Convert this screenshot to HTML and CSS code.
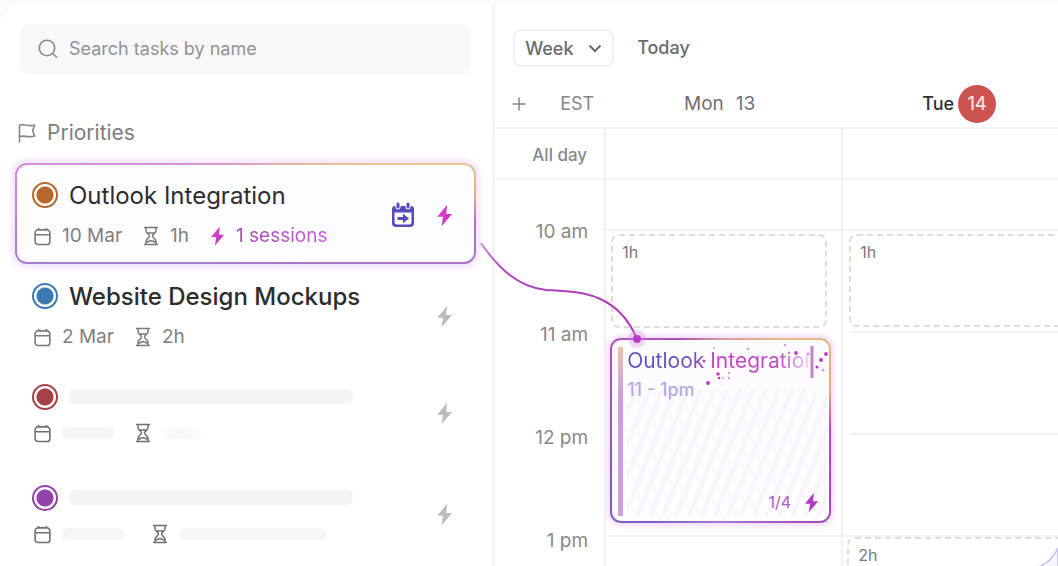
FILE: index.html
```html
<!DOCTYPE html>
<html lang="en">
<head>
<meta charset="utf-8">
<meta name="viewport" content="width=device-width, initial-scale=1">
<title>Task planner</title>
<link rel="stylesheet" href="styles.css">
</head>
<body>
<svg class="sprite" aria-hidden="true">
  <defs>
    <linearGradient id="bolt-pink" x1="0" y1="0" x2="1" y2="1">
      <stop offset="0" stop-color="#e04bb4"/>
      <stop offset="1" stop-color="#b92fd0"/>
    </linearGradient>
    <symbol id="i-bolt" viewBox="0 0 16 22"><path d="M10.6 0.6 1 12.2h5.6L5.2 21.4 15.2 9.6H9.6z"/></symbol>
    <symbol id="i-cal" viewBox="0 0 18 20"><path d="M4.2 3h9.6a3 3 0 0 1 3 3v9.500a3 3 0 0 1-3 3H4.200a3 3 0 0 1-3-3V6a3 3 0 0 1 3-3zM1.200 8.200h15.600M4.800 1v2M13.200 1v2"/></symbol>
    <symbol id="i-glass" viewBox="0 0 16 20"><path d="M1 1.500h14M1 18.500h14M3 1.500v3.200c0 2.500 3.500 3.300 3.500 5.300s-3.500 2.800-3.500 5.300v3.200M13 1.500v3.200c0 2.500-3.500 3.300-3.500 5.300s3.500 2.800 3.500 5.300v3.200M5 7h6M4 16.500c1.500-2.500 6.500-2.500 8 0"/></symbol>
  </defs>
</svg>

<div class="app">
  <aside class="sidebar">
    <label class="search">
      <svg class="search-icon" viewBox="0 0 20 20" aria-hidden="true"><circle cx="9" cy="9" r="7.700"/><path d="m14.500 14.500 4.500 4"/></svg>
      <input type="search" placeholder="Search tasks by name" aria-label="Search tasks by name">
    </label>

    <h2 class="heading">
      <svg class="flag" viewBox="0 0 18 20" aria-hidden="true"><path d="M1.500 19.500V1.500M1.500 2c5-1 9 1.500 15 .3l-1.800 5.500 1.800 5.200c-6 2-10-1-15 .5"/></svg>
      Priorities
    </h2>

    <ul class="tasks">
      <li class="task task--active">
        <span class="dot dot--orange"></span>
        <h3 class="title">Outlook Integration</h3>
        <div class="meta">
          <span class="tag"><svg class="cal"><use href="#i-cal"/></svg>10 Mar</span>
          <span class="tag"><svg class="glass"><use href="#i-glass"/></svg>1h</span>
          <span class="tag tag--pink"><svg class="bolt-small"><use href="#i-bolt"/></svg><span class="sessions">1 sessions</span></span>
        </div>
        <div class="actions">
          <button type="button" aria-label="Move to calendar">
            <svg class="move" viewBox="0 0 24 26" aria-hidden="true">
              <path class="move-body" d="M4 4h16a3 3 0 0 1 3 3v14a4 4 0 0 1-4 4H5a4 4 0 0 1-4-4V7a3 3 0 0 1 3-3z"/>
              <path class="move-page" d="M3.500 10.500h17v9.500a2.500 2.500 0 0 1-2.500 2.500H6A2.500 2.500 0 0 1 3.500 20z"/>
              <path class="move-gap" d="M7 2v3M17 2v3"/>
              <path class="move-ring" d="M7 2v3M17 2v3"/>
              <path class="move-arrow" d="M6.500 15h5.500v-3.200l6 4.700-6 4.700V18H6.500z"/>
            </svg>
          </button>
          <button type="button" class="pink" aria-label="Auto-schedule"><svg class="bolt"><use href="#i-bolt"/></svg></button>
        </div>
      </li>
      <li class="task">
        <span class="dot dot--blue"></span>
        <h3 class="title title--strong">Website Design Mockups</h3>
        <div class="meta">
          <span class="tag"><svg class="cal"><use href="#i-cal"/></svg>2 Mar</span>
          <span class="tag"><svg class="glass"><use href="#i-glass"/></svg>2h</span>
        </div>
        <div class="actions"><button type="button" aria-label="Auto-schedule"><svg class="bolt"><use href="#i-bolt"/></svg></button></div>
      </li>
      <li class="task task--loading">
        <span class="dot dot--red"></span>
        <div class="title"><span class="bar bar--title"></span></div>
        <div class="meta">
          <span class="tag"><svg class="cal"><use href="#i-cal"/></svg><span class="bar bar--short"></span></span>
          <span class="tag"><svg class="glass"><use href="#i-glass"/></svg><span class="bar bar--faint"></span></span>
        </div>
        <div class="actions"><button type="button" aria-label="Auto-schedule"><svg class="bolt"><use href="#i-bolt"/></svg></button></div>
      </li>
      <li class="task task--loading">
        <span class="dot dot--purple"></span>
        <div class="title"><span class="bar bar--title"></span></div>
        <div class="meta meta--wide">
          <span class="tag"><svg class="cal"><use href="#i-cal"/></svg><span class="bar bar--date"></span></span>
          <span class="tag"><svg class="glass"><use href="#i-glass"/></svg><span class="bar bar--long"></span></span>
        </div>
        <div class="actions"><button type="button" aria-label="Auto-schedule"><svg class="bolt"><use href="#i-bolt"/></svg></button></div>
      </li>
    </ul>
  </aside>

  <main class="calendar">
    <div class="toolbar">
      <div class="view">
        <select aria-label="Calendar view"><option>Week</option></select>
        <svg class="chevron" viewBox="0 0 14 9" aria-hidden="true"><path d="m1.500 1.500 5.500 5.500 5.500-5.500"/></svg>
      </div>
      <button type="button" class="today">Today</button>
    </div>

    <div class="grid days">
      <div class="zone">
        <button type="button" aria-label="Add time zone"><svg class="plus" viewBox="0 0 14 14" aria-hidden="true"><path d="M7 .5v13M.5 7h13"/></svg></button>
        <span>EST</span>
      </div>
      <div class="day">Mon <span>13</span></div>
      <div class="day day--now">Tue <span class="date">14</span></div>
    </div>

    <div class="grid body">
      <div class="times">
        <div class="allday">All day</div>
        <div class="hours"><span>10 am</span><span>11 am</span><span>12 pm</span><span>1 pm</span></div>
      </div>

      <div class="column">
        <div class="slot slot--allday"></div>
        <div class="slot slot--half"></div>
        <div class="slot slot--bare"></div>
        <div class="slot slot--bare"></div>
        <div class="slot"></div>
        <div class="hold hold--mon">1h</div>
        <article class="event">
          <div class="stripe"></div>
          <div class="event-body">
            <h3 class="event-title">Outlook Integration</h3>
            <p class="event-time">11 - 1pm</p>
            <div class="event-foot">1/4 <svg class="bolt-event"><use href="#i-bolt"/></svg></div>
          </div>
          <svg class="sparks" viewBox="0 0 130 60" aria-hidden="true">
            <path class="caret" d="M113 6v32"/>
            <g class="strong"><circle cx="9" cy="43" r="2"/><circle cx="19" cy="34" r="1.800"/><circle cx="20" cy="38" r="1.300"/><circle cx="97" cy="13" r="1.900"/><circle cx="5" cy="21" r="1.500"/><circle cx="122" cy="20" r="2"/><circle cx="127" cy="14" r="1.900"/><circle cx="118" cy="27" r="1.600"/></g>
            <g class="mid"><circle cx="30" cy="33" r="1.200"/><circle cx="30" cy="38" r="1.200"/><circle cx="24" cy="38" r="1"/><circle cx="109" cy="14" r="1.700"/><circle cx="86" cy="5" r="1.300"/><circle cx="49" cy="9" r="1.300"/><circle cx="15" cy="8" r="1"/><circle cx="124" cy="30" r="1.500"/></g>
          </svg>
        </article>
      </div>

      <div class="column column--inset">
        <div class="slot slot--allday"></div>
        <div class="slot slot--half"></div>
        <div class="slot"></div>
        <div class="slot"></div>
        <div class="slot"></div>
        <div class="hold hold--tue">1h</div>
        <div class="hold hold--late">2h
          <svg class="arc" viewBox="0 0 40 40" aria-hidden="true"><path d="M1 23C10 20 16 15 21 4V40H1z"/></svg>
        </div>
      </div>
    </div>

    <svg class="connector" viewBox="0 0 170 120" aria-hidden="true">
      <defs>
        <linearGradient id="wire" x1="0" y1="0" x2="1" y2="0">
          <stop offset="0" stop-color="#c98ad8"/>
          <stop offset=".15" stop-color="#b03cc0"/>
          <stop offset="1" stop-color="#b03cc0"/>
        </linearGradient>
      </defs>
      <path d="M1 4C18 29 38 48 66 51C98 53 137 52 157 100" stroke="url(#wire)"/>
      <circle class="halo" cx="157" cy="100" r="9"/>
      <circle class="node" cx="157" cy="100" r="4"/>
    </svg>
  </main>
</div>
</body>
</html>
```
FILE: styles.css
```css
* { box-sizing: border-box; }

body {
  margin: 0;
  background: #fafaff;
  color: #2c2c2e;
  font-family: Inter, "Liberation Sans", sans-serif;
  font-size: 18px;
  line-height: 24px;
}

h2, h3, p, ul { margin: 0; padding: 0; font-weight: 400; }
ul { list-style: none; }
button { padding: 0; border: 0; background: none; color: inherit; font: inherit; cursor: pointer; }
svg { display: block; flex: none; fill: none; }

.sprite { position: absolute; width: 0; height: 0; }

.app {
  display: flex;
  height: 100vh;
  padding-top: 4px;
  overflow: hidden;
}

/* Sidebar */
.sidebar {
  flex: 0 0 46.8%;
  background: #fff;
  border-top-left-radius: 24px;
  border-right: 3px solid #f3f3f4;
}

.search {
  display: flex;
  align-items: center;
  gap: 11px;
  height: 50px;
  margin: 20px 22px 0 20px;
  padding: 0 18px;
  border-radius: 8px;
  background: #f8f8f8;
}
.search-icon { width: 20px; height: 20px; stroke: #8a8a8c; stroke-width: 1.6; }
.search input {
  flex: 1;
  min-width: 0;
  padding: 0;
  border: 0;
  outline: 0;
  background: none;
  color: #555;
  font: inherit;
}
.search input::placeholder { color: #929294; opacity: 1; }

.heading {
  display: flex;
  align-items: center;
  gap: 11px;
  margin: 47px 0 18px 18px;
  color: #7d7d7f;
  font-size: 21px;
  line-height: 24px;
}
.flag { width: 18px; height: 20px; stroke: #858587; stroke-width: 1.6; }

.tasks { margin: 0 16px 0 15px; }

.task {
  display: grid;
  grid-template-columns: 26px 1fr auto;
  align-content: start;
  column-gap: 11px;
  row-gap: 10px;
  height: 101px;
  padding: 15px 21px 0 15px;
  border: 2px solid transparent;
  border-radius: 12px;
}
.task--active {
  background:
    linear-gradient(#fdfdff, #fdfdff) padding-box,
    conic-gradient(#dc9fbb, #ecc590 77deg, #e2ab85 86deg, #b26fc6 92deg, #a873c8 102deg, #a57fcc 258deg, #cb86dd 276deg, #d68ede 284deg, #dc9fbb) border-box;
  box-shadow: 0 0 5px 4px #f4e6fb;
}

.dot {
  width: 26px;
  height: 26px;
  margin-top: 2px;
  border: 2px solid;
  border-radius: 50%;
  background: radial-gradient(circle, currentColor 8px, #fff 9px);
}
.dot--orange { color: #b5672c; }
.dot--blue { color: #3c7bb1; }
.dot--red { color: #a64047; }
.dot--purple { color: #9642ab; }

.title { font-size: 24px; line-height: 32px; white-space: nowrap; }
.title--strong { font-weight: 500; }

.meta {
  grid-column: 1 / 3;
  grid-row: 2;
  display: flex;
  gap: 21px;
  height: 28px;
  padding-left: 2px;
  color: #7f7f81;
  font-size: 19px;
}
.meta--wide { gap: 28px; }
.tag { display: flex; align-items: center; gap: 11px; }
.cal { width: 17px; height: 19px; stroke: #79797b; stroke-width: 1.7; }
.glass { width: 16px; height: 20px; stroke: #79797b; stroke-width: 1.5; }
.bolt-small { width: 15px; height: 20px; fill: url(#bolt-pink); }
.sessions {
  background: linear-gradient(90deg, #9c4cb5, #c95ad8);
  -webkit-background-clip: text;
  background-clip: text;
  color: transparent;
}

.actions {
  grid-column: 3;
  grid-row: 1 / 3;
  display: flex;
  align-items: center;
  gap: 21px;
  color: #bcbcbd;
}
.bolt { width: 17px; height: 23px; fill: currentColor; }
.pink .bolt { fill: url(#bolt-pink); }
.move { width: 24px; height: 26px; }
.move-body { fill: #554bb9; }
.move-page { fill: #fdfdff; }
.move-gap { stroke: #fdfdff; stroke-width: 5; stroke-linecap: round; }
.move-ring { stroke: #554bb9; stroke-width: 3; stroke-linecap: round; }
.move-arrow { fill: #554bb9; }

.task--loading { row-gap: 11px; }
.task--loading .meta { height: 24px; }
.task--loading .cal, .task--loading .glass { stroke: #707072; }
.task--loading .title { display: flex; align-items: center; }
.bar { display: block; height: 12px; border-radius: 6px; background: #f5f5f5; }
.bar--title { width: 284px; height: 15px; background: #f4f4f4; }
.bar--short { width: 52px; }
.bar--date { width: 62px; }
.bar--long { width: 148px; }
.bar--faint { width: 40px; background: linear-gradient(90deg, #fcfcfc, #f6f6f6, #fdfdfd); }

/* Calendar */
.calendar {
  position: relative;
  flex: 1;
  min-width: 0;
  background: #fff;
  color: #6f6f71;
}

.toolbar {
  display: flex;
  align-items: center;
  gap: 23px;
  padding: 25px 18px 0;
}
.view {
  display: grid;
  align-items: center;
  border: 2px solid #f0f0f1;
  border-radius: 8px;
}
.view select {
  grid-area: 1 / 1;
  width: 97px;
  height: 34px;
  padding: 0 10px;
  border: 0;
  outline: 0;
  background: none;
  color: #6a6a6c;
  font: 500 18px Inter, "Liberation Sans", sans-serif;
  appearance: none;
}
.chevron {
  grid-area: 1 / 1;
  justify-self: end;
  width: 14px;
  height: 9px;
  margin-right: 10px;
  stroke: #6a6a6c;
  stroke-width: 2;
  pointer-events: none;
}
.today { color: #6a6a6c; font-weight: 500; }

.grid {
  display: grid;
  grid-template-columns: 111px minmax(237px, 1fr) minmax(237px, 1fr);
  overflow: hidden;
}
.days {
  height: 62px;
  padding-top: 12px;
  border-bottom: 2px solid #f3f3f4;
}
.zone {
  display: flex;
  align-items: center;
  justify-content: space-between;
  height: 50px;
  padding: 0 12px 0 17px;
  color: #858587;
}
.plus { width: 14px; height: 14px; stroke: #858587; stroke-width: 1.5; }
.day { display: flex; align-items: center; justify-content: center; gap: 12px; height: 50px; padding-right: 10px; font-size: 19px; }
.day--now { gap: 4px; padding-right: 5px; color: #303032; font-size: 18px; font-weight: 500; }
.date {
  display: grid;
  place-items: center;
  width: 38px;
  height: 38px;
  border-radius: 50%;
  background: #cc5350;
  color: #fbe3e3;
}

.times { border-right: 2px solid #f0f0f1; color: #88888a; text-align: right; }
.allday { height: 51px; padding: 14px 17px 0 0; border-bottom: 2px solid #f3f3f4; font-size: 17px; font-weight: 500; }
.hours { display: grid; grid-auto-rows: 103px; padding: 40px 16px 0 0; font-size: 19px; }

.column { position: relative; border-right: 2px solid #f1f1f2; }
.slot { height: 102px; border-bottom: 2px solid #f3f3f4; }
.slot--allday { height: 51px; }
.slot--half { height: 51px; }
.slot--bare { border-color: transparent; }
.column--inset .slot:nth-child(3), .column--inset .slot:nth-child(4) { margin-left: 7px; }

.hold {
  position: absolute;
  padding: 4px 9px;
  border: 2px dashed #dcdcdd;
  border-radius: 8px;
  background: #fff;
  color: #79797b;
  font-size: 16px;
}
.hold--mon { top: 105px; left: 5px; right: 14px; height: 94px; }
.hold--tue { top: 105px; left: 6px; right: 0; height: 93px; }
.hold--late { top: 408px; left: 4px; right: 0; height: 200px; }
.arc { position: absolute; top: 5px; left: 188px; width: 40px; height: 40px; fill: #f7f7fe; stroke: #c3bfea; stroke-width: 1.5; }

.event {
  position: absolute;
  top: 209px;
  left: 4px;
  right: 10px;
  height: 185px;
  display: flex;
  gap: 4px;
  padding: 7px 2px 5px 6px;
  border: 2px solid transparent;
  border-radius: 11px;
  background:
    linear-gradient(#fefbff, #fefcff) padding-box,
    conic-gradient(#d79a9a, #e8bd86 40deg, #e0ac84 70deg, #a84fb4 90deg, #a54db9 135deg, #a57ad8 180deg, #7c5cc0 225deg, #9a55bd 270deg, #b054bd 315deg, #a850b0 335deg, #d79a9a) border-box;
  box-shadow: 0 0 5px 3px #f3dcfa;
}
.stripe { width: 5px; background: linear-gradient(#e8c3b0, #cf9ce0 30%, #cf9fe2); }
.event-body {
  flex: 1;
  display: flex;
  flex-direction: column;
  min-width: 0;
  background: repeating-linear-gradient(112deg, #fff0 0 6px, #f7f5fc 8px 10px, #fff0 12px) 0 42px no-repeat;
}
.event-title {
  align-self: flex-start;
  background: linear-gradient(90deg, #5a52bf 20%, #7d50c4 36%, #bd45c0 43%, #bd50c6 80%, #bd50c655 94%, #bd50c600 97%);
  -webkit-background-clip: text;
  background-clip: text;
  color: transparent;
  font-size: 21px;
  line-height: 28px;
  white-space: nowrap;
}
.event-time { margin-top: 3px; color: #b3abe6; font-weight: 500; }
.event-foot {
  display: flex;
  align-items: center;
  justify-content: flex-end;
  gap: 13px;
  margin-top: auto;
  padding: 0 8px 2px 0;
  color: #b05cc0;
  font-size: 16px;
}
.bolt-event { width: 15px; height: 21px; fill: #b23ac4; }
.sparks { position: absolute; top: 0; right: 0; width: 130px; height: 60px; }
.strong { fill: #b93fc0; }
.mid { fill: #d79be0; }
.caret { stroke: #c583d0; stroke-width: 3; }

.connector {
  position: absolute;
  top: 235px;
  left: -15px;
  width: 170px;
  height: 120px;
  stroke-width: 2;
  pointer-events: none;
}
.halo { fill: #d98be655; }
.node { fill: #b83cc8; }
```
